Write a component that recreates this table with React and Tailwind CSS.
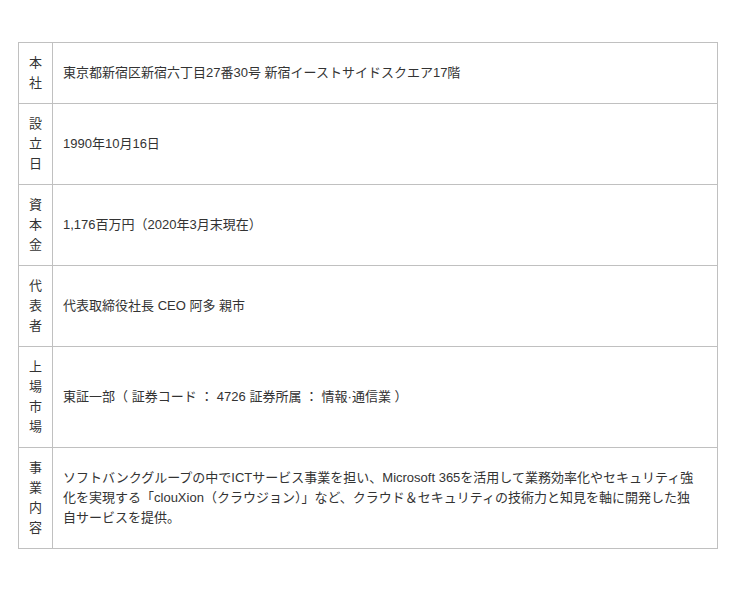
import React from 'react';

const rows = [
  { label: '本社', value: '東京都新宿区新宿六丁目27番30号 新宿イーストサイドスクエア17階' },
  { label: '設立日', value: '1990年10月16日' },
  { label: '資本金', value: '1,176百万円（2020年3月末現在）' },
  { label: '代表者', value: '代表取締役社長 CEO 阿多 親市' },
  { label: '上場市場', value: '東証一部（ 証券コード ： 4726 証券所属 ： 情報·通信業 ）' },
  {
    label: '事業内容',
    value:
      'ソフトバンクグループの中でICTサービス事業を担い、Microsoft 365を活用して業務効率化やセキュリティ強化を実現する「clouXion（クラウジョン）」など、クラウド＆セキュリティの技術力と知見を軸に開発した独自サービスを提供。',
  },
];

const App = () => {
  return (
    <div
      className="min-h-[589px] bg-white pt-[42px] pl-[18px] text-[13px] leading-[20px] text-[#333]"
      style={{ fontFamily: '"Liberation Sans", Arial, "Noto Sans CJK JP", sans-serif' }}
    >
      <table className="w-[700px] border-collapse">
        <tbody>
          {rows.map(row => (
            <tr key={row.label}>
              <th className="w-[34px] border border-[#c0c0c0] px-[10px] py-[10px] align-middle font-normal">
                {row.label.split('').map((ch, i) => (
                  <div key={i} className="text-center">{ch}</div>
                ))}
              </th>
              <td className="border border-[#c0c0c0] py-[10px] pl-[10px] pr-[16px] align-middle text-left">
                {row.value}
              </td>
            </tr>
          ))}
        </tbody>
      </table>
    </div>
  );
};

export default App;
